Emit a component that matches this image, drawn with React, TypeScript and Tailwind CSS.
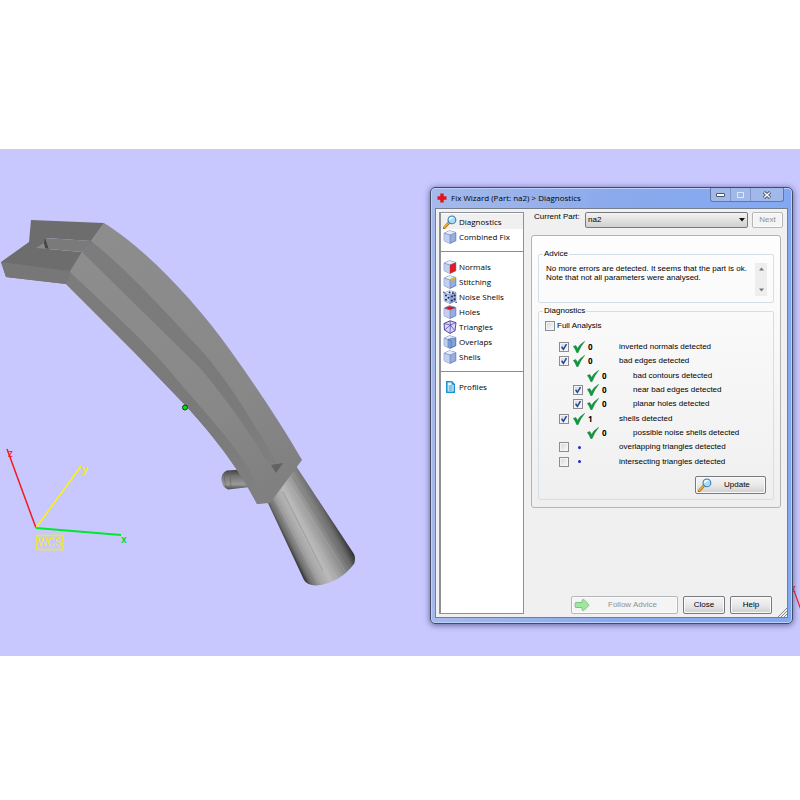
import React from 'react'

type CubeKind = 'plain' | 'normals' | 'stitching' | 'noise' | 'holes' | 'triangles' | 'overlaps' | 'profiles' | 'search'

type Check = {
  label: string
  count?: number
  box?: boolean
  checked?: boolean
  indent?: boolean
}

const checks: Check[] = [
  { label: 'inverted normals detected', count: 0, box: true, checked: true },
  { label: 'bad edges detected', count: 0, box: true, checked: true },
  { label: 'bad contours detected', count: 0, indent: true },
  { label: 'near bad edges detected', count: 0, box: true, checked: true, indent: true },
  { label: 'planar holes detected', count: 0, box: true, checked: true, indent: true },
  { label: 'shells detected', count: 1, box: true, checked: true },
  { label: 'possible noise shells detected', count: 0, indent: true },
  { label: 'overlapping triangles detected', box: true },
  { label: 'intersecting triangles detected', box: true },
]

const menu: { label: string; icon: CubeKind }[][] = [
  [
    { label: 'Diagnostics', icon: 'search' },
    { label: 'Combined Fix', icon: 'plain' },
  ],
  [
    { label: 'Normals', icon: 'normals' },
    { label: 'Stitching', icon: 'stitching' },
    { label: 'Noise Shells', icon: 'noise' },
    { label: 'Holes', icon: 'holes' },
    { label: 'Triangles', icon: 'triangles' },
    { label: 'Overlaps', icon: 'overlaps' },
    { label: 'Shells', icon: 'plain' },
  ],
  [{ label: 'Profiles', icon: 'profiles' }],
]

const SearchIcon: React.FC = () => (
  <svg viewBox="0 0 14 14" className="h-[14px] w-[14px] shrink-0" aria-hidden="true">
    <path d="M1.2 12.8 5.6 8" stroke="#a8690f" strokeWidth="2.6" strokeLinecap="round" />
    <path d="M1.3 12.5 5.4 8" stroke="#f0b13a" strokeWidth="1.5" strokeLinecap="round" />
    <circle cx="8.9" cy="4.9" r="3.9" fill="#a9dcf5" stroke="#3a7fb5" strokeWidth="1.1" />
    <path d="M6.6 4.9a2.4 2.4 0 0 1 3.6-2" stroke="#fff" strokeWidth="1.2" fill="none" />
  </svg>
)

const MenuIcon: React.FC<{ kind: CubeKind }> = ({ kind }) => {
  if (kind === 'search') return <SearchIcon />
  if (kind === 'profiles') {
    return (
      <svg viewBox="0 0 14 14" className="h-[14px] w-[14px] shrink-0" aria-hidden="true">
        <path d="M3 1h6l3 3v9H3z" fill="#1c94cf" />
        <path d="M4.6 2.5h4v2.2h2v6.8h-6z" fill="#e8f6fd" />
        <path d="M5.6 6h4M5.6 8h4M5.6 10h4" stroke="#1c94cf" strokeWidth="1" />
      </svg>
    )
  }
  if (kind === 'triangles') {
    return (
      <svg viewBox="0 0 14 14" className="h-[14px] w-[14px] shrink-0" aria-hidden="true">
        <path d="M1 3.5 7 .8l6 1.8-1 8.2-5 2.6L1.5 10z" fill="#d9d5f7" stroke="#423a96" strokeWidth=".9" />
        <path d="M1 3.5 7.4 5 13 2.6M7.4 5 7 13.4M1.5 10 7.4 5 12 10.8M7 .8l.4 4.2" fill="none" stroke="#4a42a4" strokeWidth=".7" />
      </svg>
    )
  }
  return (
    <svg viewBox="0 0 14 14" className="h-[14px] w-[14px] shrink-0" aria-hidden="true">
      <path d="M1.2 3.2 6.5.8l6.3 1.7v8.3L7 13.4l-5.8-2.7z" fill="#98addf" stroke="#5d72ac" strokeWidth=".8" />
      <path d="M1.2 3.2 6.5.8l6.3 1.7L7 4.9z" fill="#e6eefb" />
      <path d="M1.2 3.2 7 4.9v8.5l-5.8-2.7z" fill="#c3d0f0" />
      <path d="M1.2 3.2 7 4.9l5.8-2.4M7 4.9v8.5" fill="none" stroke="#667bb4" strokeWidth=".6" />
      {kind === 'normals' && <path d="M7 4.9l5.8-2.4v8.3L7 13.4z" fill="#dd1c24" />}
      {kind === 'holes' && <path d="M2.2 3.1 6.6 1.2l5.4 1.5L7 4.6z" fill="#dc1420" stroke="#8f1c3a" strokeWidth=".5" />}
      {kind === 'stitching' && <path d="M6.6 5 12.6 2.5M8 3l2 2.4M10.2 2.2l1.6 2" stroke="#d8bd1b" strokeWidth="1.3" />}
      {kind === 'overlaps' && (
        <>
          <path d="M5 4.5 9 3l3.5 1v6.5L7.5 13l-2.5-1z" fill="#7fa3dc" stroke="#5272ad" strokeWidth=".6" />
          <path d="M5 4.5 8.2 5.6v7" fill="none" stroke="#44649f" strokeWidth=".6" />
        </>
      )}
      {kind === 'noise' && (
        <g fill="#1d2a52">
          <circle cx="3" cy="5.5" r="1" />
          <circle cx="5.5" cy="7.7" r="1" />
          <circle cx="3" cy="9.8" r="1" />
          <circle cx="6.6" cy="2.4" r="1" />
          <circle cx="9.9" cy="3" r=".9" />
          <circle cx="9" cy="6.6" r="1" />
          <circle cx="11.6" cy="5.4" r="1" />
          <circle cx="8.8" cy="10.6" r="1" />
          <circle cx="11.5" cy="9.3" r="1" />
          <circle cx=".9" cy="2.2" r=".7" />
          <circle cx="13.1" cy="12.2" r=".8" />
        </g>
      )}
    </svg>
  )
}

const Tick: React.FC = () => (
  <svg viewBox="0 0 12 12" className="h-[12px] w-[12px]" aria-hidden="true">
    <path d="M.4 5.4 2.8 4.6 4.5 7.4Q7 3 11.6.4 7.6 5 5.1 11.6L3.8 11.7Q2.6 8 .4 5.4Z" fill="#0f9a41" stroke="#0a7a31" strokeWidth=".5" />
  </svg>
)

const CheckBox: React.FC<{ id: string; checked?: boolean }> = ({ id, checked }) => (
  <span className="relative block h-[10px] w-[10px] shrink-0">
    <input
      id={id}
      type="checkbox"
      defaultChecked={checked}
      className="peer block h-[10px] w-[10px] appearance-none border border-[#8b8d90] bg-linear-to-br from-[#d3d6da] to-[#fbfbfb] shadow-[inset_0_0_0_1px_#f4f4f4]"
    />
    <svg viewBox="0 0 10 10" className="pointer-events-none absolute inset-0 hidden h-[10px] w-[10px] peer-checked:block" aria-hidden="true">
      <path d="M2.6 4.8 4.4 7.3 7.5 2.2" fill="none" stroke="#24469b" strokeWidth="1.5" />
    </svg>
  </span>
)

const Scene: React.FC = () => (
  <svg viewBox="0 149 800 507" width="800" height="507" className="absolute left-0 top-0" aria-hidden="true">
    <defs>
      <linearGradient id="cone" gradientUnits="userSpaceOnUse" x1="284" y1="540" x2="333" y2="515">
        <stop offset="0" stopColor="#343434" />
        <stop offset=".08" stopColor="#6f6f6f" />
        <stop offset=".25" stopColor="#a6a6a6" />
        <stop offset=".42" stopColor="#bababa" />
        <stop offset=".62" stopColor="#9c9c9c" />
        <stop offset=".87" stopColor="#6a6a6a" />
        <stop offset="1" stopColor="#353535" />
      </linearGradient>
      <linearGradient id="pin" x1="0" y1="0" x2="0" y2="1">
        <stop offset="0" stopColor="#3a3a3a" />
        <stop offset=".35" stopColor="#747474" />
        <stop offset=".75" stopColor="#9a9a9a" />
        <stop offset="1" stopColor="#4a4a4a" />
      </linearGradient>
      <linearGradient id="light" gradientUnits="userSpaceOnUse" x1="100" y1="240" x2="280" y2="480">
        <stop offset="0" stopColor="#8d8d8d" />
        <stop offset=".7" stopColor="#888" />
        <stop offset="1" stopColor="#808080" />
      </linearGradient>
      <linearGradient id="shade" gradientUnits="userSpaceOnUse" x1="100" y1="240" x2="280" y2="480">
        <stop offset="0" stopColor="#7c7c7c" />
        <stop offset=".7" stopColor="#7a7a7a" />
        <stop offset="1" stopColor="#808080" />
      </linearGradient>
    </defs>

    {/* Pin and cone */}
    <path d="M250 469 227 470.5Q221 473 221.5 480T228 489.5L250 487Z" fill="url(#pin)" />
    <path d="M226 471q-4 9 2 18M230 471l1 18" stroke="#656565" strokeWidth=".6" fill="none" />
    <path d="M267 501 304 580Q308 587 321 585 341 581 354 564 356 559 354 554L296 466Z" fill="url(#cone)" />
    <path d="M275 498 318 583M280 495 330 581M285 490 337 578M289 483 345 571" stroke="#bdbdbd" strokeWidth=".6" opacity=".5" />
    <path d="M272 500 309 583M283 492 323 571M292 476 348 565" stroke="#6c6c6c" strokeWidth=".6" opacity=".5" />

    {/* Curved bar */}
    <path d="M104 223C146 249 195 301 230 350 257 388 280 422 302 460L296 468 270 503 257 504C243 476 218 440 184 404L133 351 66 284 69 271 82 252 91 241Z" fill="url(#light)" />
    <path d="M91 241C130 272 166 313 200 349 230 382 255 426 277 463L268 463C247 428 220 391 200 368L82 252Z" fill="url(#shade)" />
    <path d="M69 271C98 299 145 340 180 383 208 416 230 439 248 467L264 503 257 504C243 476 218 440 184 404L133 351 66 284Z" fill="url(#shade)" />
    <path d="M31 220 104 223 91 241 46 238 48 249 82 252 70 271 66 284 6 277 1 262 29 242Z" fill="#6d6d6d" />
    <path d="M45 238 92 241 82 252 49 249Z" fill="#7a7a7a" />
    <path d="M1 262 70 271 66 284 6 277Z" fill="#777" />
    <path d="M36 248 44 243 49 249Z" fill="#8a8a8a" />
    <path d="M45 238 49 249 45 248 44 243Z" fill="#474747" />
    <path d="M271 465 283 463 276 473Z" fill="#626262" />
    <circle cx="185" cy="407.5" r="2.5" fill="#00e015" stroke="#123c12" />

    {/* World axes */}
    <g fill="none">
      <path d="M7 449 36 528" stroke="#f5191f" strokeWidth="1.5" />
      <path d="M36 528 81 466" stroke="#fdf500" strokeWidth="1.5" />
      <path d="M36 528 121 535" stroke="#00e82c" strokeWidth="2" />
      <path d="M793 588 801 610" stroke="#f5191f" strokeWidth="1.2" />
      <path d="M37 535.5H63V549.5H37Z" stroke="#f5ee00" strokeWidth="1.4" />
    </g>
    <g className="font-['Liberation_Sans']">
      <text x="8" y="457" fontSize="10" fill="#f5191f">z</text>
      <text x="82" y="473" fontSize="11" fontWeight="700" fill="#f5ee00">y</text>
      <text x="121" y="543" fontSize="10" fontWeight="700" fill="#00d92b">x</text>
      <text x="38" y="546" fontSize="10" fill="#f5ee00">WCS</text>
      <text x="791" y="592" fontSize="10" fill="#f5191f">z</text>
    </g>
  </svg>
)

const pushButton = 'rounded-[2px] border border-[#77797c] bg-linear-to-b from-[#f5f5f5] via-[#e9e9e9] to-[#cfcfcf] shadow-[inset_0_0_0_1px_#fafafa]'
const dimButton = 'rounded-[2px] border border-[#b4b6b9] bg-[#f4f4f4] text-[#8f9093] shadow-[inset_0_0_0_1px_#fbfbfb]'

const TitleBar: React.FC = () => (
  <header className="flex h-[20px] items-start justify-between pl-[2px] font-['Open_Sans',sans-serif]">
    <h1 className="flex h-[20px] items-center gap-[4px]">
      <svg viewBox="0 0 10 10" className="h-[10px] w-[10px]" aria-hidden="true">
        <path d="M3.3.5h3.4v2.8h2.8v3.4H6.7v2.8H3.3V6.7H.5V3.3h2.8z" fill="#e3121b" />
      </svg>
      Fix Wizard (Part: na2) &gt; Diagnostics
    </h1>
    <div className="mr-[4px] flex h-[14px] rounded-b-[3px] border border-t-0 border-[#64789f] bg-[#a0b9ea]">
      <button type="button" aria-label="Minimize" className="flex w-[20px] items-center justify-center border-r border-[#7e97c8]">
        <span className="h-[4px] w-[9px] rounded-[1px] border border-[#4c5669] bg-white" />
      </button>
      <button type="button" aria-label="Maximize" disabled className="flex w-[20px] items-center justify-center border-r border-[#7e97c8]">
        <span className="h-[6px] w-[7px] border border-[#dce6fa]" />
      </button>
      <button type="button" aria-label="Close window" className="flex w-[32px] items-center justify-center">
        <svg viewBox="0 0 10 8" className="h-[8px] w-[10px]" aria-hidden="true">
          <path d="M2 1.2 8 6.8M8 1.2 2 6.8" stroke="#454e60" strokeWidth="3.2" />
          <path d="M2.3 1.5 7.7 6.5M7.7 1.5 2.3 6.5" stroke="#fff" strokeWidth="1.5" />
        </svg>
      </button>
    </div>
  </header>
)

const Sidebar: React.FC = () => (
  <nav className="w-[85px] shrink-0 border border-l-2 border-[#8d9096] bg-white pt-[1px] font-['Open_Sans',sans-serif]">
    {menu.map((group, g) => (
      <React.Fragment key={g}>
        {g > 0 && <hr className="my-[7px] border-[#8e8e8e]" />}
        {group.map((item) => (
          <button
            key={item.label}
            type="button"
            className={
              item.icon === 'search'
                ? 'flex h-[15px] w-full items-center gap-[2px] whitespace-nowrap bg-[#f0f0f0] pl-[2px]'
                : 'flex h-[15px] w-full items-center gap-[2px] whitespace-nowrap pl-[2px]'
            }
          >
            <MenuIcon kind={item.icon} />
            {item.label}
          </button>
        ))}
      </React.Fragment>
    ))}
  </nav>
)

const App: React.FC = () => {
  return (
    <div className="min-h-screen bg-white py-[149px] font-['Liberation_Sans',sans-serif] text-[8px] leading-[10px] text-black">
      <main className="relative flex justify-end overflow-hidden bg-[#c8c8ff] pb-[32px] pr-[7px] pt-[38px]">
        <Scene />

        {/* Fix wizard window */}
        <section className="relative w-[363px] rounded-[5px] border border-[#414d68] bg-linear-to-r from-[#a6baea] via-[#8baaec] to-[#83a8f3] px-[4px] pb-[5px] shadow-[0_1px_6px_#5a5a8c,inset_0_0_0_1px_#bcd0fb]">
          <TitleBar />

          <div className="relative flex h-[410px] border border-[#777e8b] bg-[#f0f0f0] p-[3px]">
            <Sidebar />

            <div className="flex min-w-0 flex-1 flex-col pl-[7px]">
              <div className="flex h-[16px] gap-[4px] pl-[3px] pr-[1px]">
                <label htmlFor="part" className="w-[47px] shrink-0 whitespace-nowrap leading-[9px]">
                  Current Part:
                </label>
                <div className="relative flex-1">
                  <select
                    id="part"
                    className="h-[16px] w-full appearance-none rounded-[2px] border border-[#77797c] bg-linear-to-b from-[#f2f2f2] to-[#d0d0d0] pl-[2px]"
                  >
                    <option>na2</option>
                  </select>
                  <svg viewBox="0 0 6 4" className="pointer-events-none absolute right-[3px] top-[6px] h-[4px] w-[6px]" aria-hidden="true">
                    <path d="M0 0h6L3 3.5z" fill="#111" />
                  </svg>
                </div>
                <button type="button" disabled className={`w-[31px] ${dimButton}`}>
                  Next
                </button>
              </div>

              <div className="mr-[3px] mt-[7px] rounded-[3px] border border-[#b3b3b5] bg-linear-to-b from-[#fefefe] to-[#efefef] px-[6px] pb-[7px] pt-[13px]">
                <fieldset className="h-[54px] rounded-[2px] border border-[#d3dfe6] pl-[4px]">
                  <legend className="px-[1px]">Advice</legend>
                  <div className="flex justify-between pl-[3px] pr-[6px] pt-[4px]">
                    <p className="whitespace-nowrap pt-[1px] leading-[9px]">
                      No more errors are detected. It seems that the part is ok.
                      <br />
                      Note that not all parameters were analysed.
                    </p>
                    <div className="flex h-[33px] w-[12px] flex-col items-center justify-between bg-[#eeeeef] py-[4px]">
                      <svg viewBox="0 0 5 4" className="h-[4px] w-[5px]" aria-hidden="true">
                        <path d="M0 3.5h5L2.5.5z" fill="#777" />
                      </svg>
                      <svg viewBox="0 0 5 4" className="h-[4px] w-[5px]" aria-hidden="true">
                        <path d="M0 .5h5L2.5 3.5z" fill="#777" />
                      </svg>
                    </div>
                  </div>
                </fieldset>

                <fieldset className="mt-[3px] h-[194px] rounded-[2px] border border-[#d3dfe6] pl-[4px]">
                  <legend className="px-[1px]">Diagnostics</legend>
                  <div className="mt-[5px] flex items-center gap-[2px] pl-[2px]">
                    <CheckBox id="full" />
                    <label htmlFor="full">Full Analysis</label>
                  </div>

                  <div className="mt-[9px] grid h-[129px] grid-rows-9 pl-[16px]">
                    {checks.map((c, i) => (
                      <div key={c.label} className={c.indent ? 'flex items-center pl-[14px]' : 'flex items-center'}>
                        <span className="w-[14px]">{c.box && <CheckBox id={`check-${i}`} checked={c.checked} />}</span>
                        <span className="flex w-[15px] justify-start">
                          {c.count === undefined ? <span className="ml-[5px] h-[3px] w-[3px] rounded-full bg-[#2424dc]" /> : <Tick />}
                        </span>
                        <b className="w-[31px] font-['Open_Sans',sans-serif]">{c.count}</b>
                        <label htmlFor={c.box ? `check-${i}` : undefined}>{c.label}</label>
                      </div>
                    ))}
                  </div>

                  <div className="mt-[7px] flex justify-end pr-[7px]">
                    <button type="button" className={`flex h-[18px] w-[71px] items-center gap-[12px] pl-[2px] ${pushButton}`}>
                      <SearchIcon />
                      Update
                    </button>
                  </div>
                </fieldset>
              </div>

              <footer className="mr-[12px] mt-auto flex justify-end gap-[5px]">
                <button type="button" disabled className={`flex h-[18px] w-[107px] items-center gap-[18px] pl-[2px] ${dimButton}`}>
                  <svg viewBox="0 0 16 14" className="h-[14px] w-[16px]" aria-hidden="true">
                    <path d="M1.5 4.5h6.5V2.3Q8.8.8 10.3 2L14.5 6.2Q15 7 14.5 7.8L10.3 12Q8.8 13.2 8 11.7V9.5H1.5Q.5 7 1.5 4.5Z" fill="#a2e5a0" stroke="#7cc77e" />
                  </svg>
                  Follow Advice
                </button>
                <button type="button" className={`h-[18px] w-[42px] ${pushButton}`}>
                  Close
                </button>
                <button type="button" className={`h-[18px] w-[42px] ${pushButton}`}>
                  Help
                </button>
              </footer>
            </div>

            <svg viewBox="0 0 9 9" className="absolute bottom-0 right-0 h-[9px] w-[9px]" aria-hidden="true">
              <path d="M0 9 9 0M3 9 9 3M6 9 9 6" stroke="#8a8a8a" />
            </svg>
          </div>
        </section>
      </main>
    </div>
  )
}

export default App
